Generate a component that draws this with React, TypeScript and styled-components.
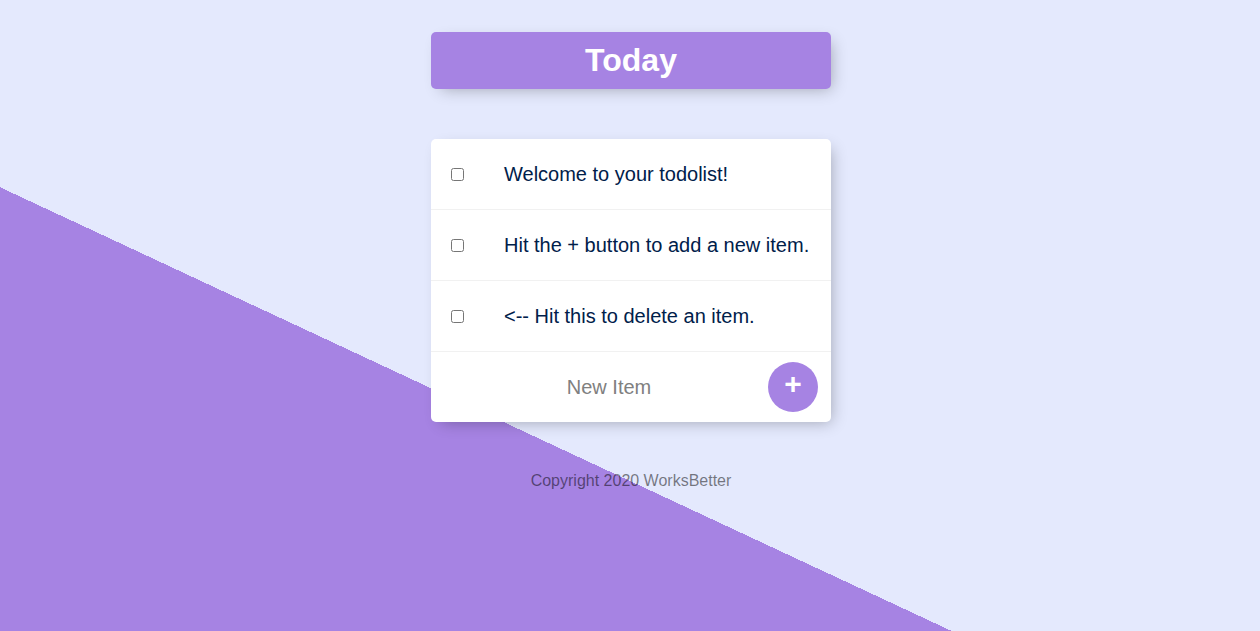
import React from "react";
import styled, { createGlobalStyle } from "styled-components";

const GlobalStyle = createGlobalStyle`
	html, body {
		margin: 0;
		padding: 0;
	}
	body {
		font-family: "Liberation Sans", Arial, Helvetica, sans-serif;
	}
`;

const Page = styled.div`
	min-height: 100vh;
	box-sizing: border-box;
	padding: 32px 0 0 2px;
	background-color: #e4e9fd;
	background-image: linear-gradient(25deg, #a683e3 50%, #e4e9fd 50%);
	background-size: 100% 962px;
	background-repeat: no-repeat;
	overflow: hidden;
`;

const Box = styled.div<{ $heading?: boolean }>`
	max-width: 400px;
	margin: 0 auto 50px;
	background: ${(p) => (p.$heading ? "#a683e3" : "white")};
	text-align: ${(p) => (p.$heading ? "center" : "left")};
	border-radius: 5px;
	box-shadow: 5px 5px 15px -5px rgba(0, 0, 0, 0.3);
`;

const Title = styled.h1`
	margin: 0;
	padding: 10px;
	color: #fff;
	font-size: 32px;
	line-height: 37px;
	font-weight: bold;
`;

const Item = styled.div`
	min-height: 70px;
	display: flex;
	align-items: center;
	border-bottom: 1px solid #f1f1f1;
	&:last-child {
		border-bottom: 0;
	}
`;

const Check = styled.input`
	margin: 20px;
	width: 13px;
	height: 13px;
`;

const Text = styled.p`
	margin: 0;
	padding: 20px;
	font-size: 20px;
	font-weight: 200;
	color: #00204a;
`;

const Form = styled.form`
	display: flex;
	align-items: center;
	margin-left: 20px;
	min-height: 70px;
`;

const NewItem = styled.input`
	text-align: center;
	height: 60px;
	border: none;
	background: transparent;
	font-family: inherit;
	font-size: 20px;
	font-weight: 200;
	width: 316px;
	padding: 0;
	&::placeholder {
		color: grey;
		opacity: 1;
	}
	&:focus {
		outline: none;
		box-shadow: inset 0 -3px 0 0 #a683e3;
	}
`;

const AddButton = styled.button`
	height: 50px;
	width: 50px;
	margin-left: 1px;
	border-radius: 50%;
	border: 0;
	background-color: #a683e3;
	color: #fff;
	font-family: inherit;
	font-size: 30px;
	font-weight: bold;
	line-height: 1;
	padding: 0 0 6px;
	cursor: pointer;
`;

const Footer = styled.footer`
	color: rgba(0, 0, 0, 0.5);
	text-align: center;
	font-size: 16px;
`;

const items = [
	"Welcome to your todolist!",
	"Hit the + button to add a new item.",
	"<-- Hit this to delete an item.",
];

const App = () => {
	return (
		<>
			<GlobalStyle />
			<Page>
				<Box $heading>
					<Title>Today</Title>
				</Box>
				<Box>
					{items.map((item) => (
						<Item key={item}>
							<Check type="checkbox" />
							<Text>{item}</Text>
						</Item>
					))}
					<Item>
						<Form onSubmit={(e) => e.preventDefault()}>
							<NewItem type="text" name="newItem" placeholder="New Item" autoComplete="off" />
							<AddButton type="submit">+</AddButton>
						</Form>
					</Item>
				</Box>
				<Footer>Copyright 2020 WorksBetter</Footer>
			</Page>
		</>
	);
};

export default App;
